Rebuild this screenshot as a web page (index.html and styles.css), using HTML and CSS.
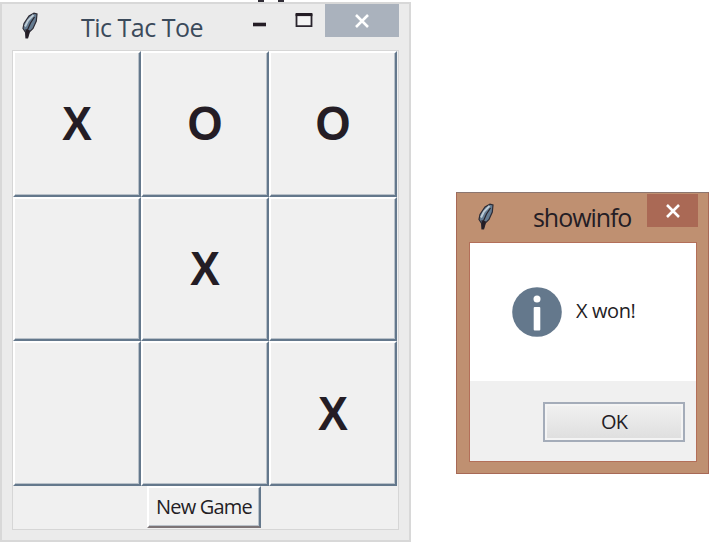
FILE: index.html
```html
<!DOCTYPE html>
<html lang="en">
<head>
<meta charset="utf-8">
<title>Tic Tac Toe</title>
<link rel="stylesheet" href="styles.css">
</head>
<body>
<svg width="0" height="0" class="defs" aria-hidden="true">
  <symbol id="feather" viewBox="0 0 16 27">
    <path d="M4 26 3.6 20.5 1 16.5 2 11.5 7 4 12 1.2 15 2 14.3 9 11 16.5 7.3 20 5.6 26Z" fill="#647b91" stroke="#2d2b34" stroke-width="1.2"/>
    <path d="M3 14.5 6 8.5 11.5 3" fill="none" stroke="#bdcbd5" stroke-width="2"/>
    <path d="M12.5 5 8.5 11 5 19" fill="none" stroke="#28232b" stroke-width="1.2"/>
    <path d="M3.5 17 8 18.5 5.7 26H3.9Z" fill="#241d25"/>
  </symbol>
  <symbol id="cross" viewBox="0 0 14 14">
    <path d="M1 1 13 13M13 1 1 13" fill="none" stroke="#fff" stroke-width="2.6"/>
  </symbol>
</svg>
<main class="desktop">
  <i class="mark mark-a"></i><i class="mark mark-b"></i>
  <section class="window game">
    <header class="game-bar">
      <svg class="feather"><use href="#feather"/></svg>
      <h1 class="title">Tic Tac Toe</h1>
      <svg class="minmax" viewBox="0 0 62 16">
        <path d="M0 11.5H13" stroke="#241d25" stroke-width="3.6"/>
        <path d="M43.5 1V13.2H58.5V1" fill="#f4f4f4" stroke="#2a252e" stroke-width="1.8"/>
        <path d="M42.6 1.5H59.4" stroke="#241d25" stroke-width="3.2"/>
      </svg>
      <div class="close close-gray"><svg class="cross"><use href="#cross"/></svg></div>
    </header>
    <div class="frame">
      <div class="board">
        <div class="cell"><span>X</span></div><div class="cell"><span>O</span></div><div class="cell"><span>O</span></div>
        <div class="cell"></div><div class="cell"><span>X</span></div><div class="cell"></div>
        <div class="cell"></div><div class="cell"></div><div class="cell"><span>X</span></div>
      </div>
      <div class="new-game"><span>New Game</span></div>
    </div>
  </section>
  <section class="window dialog">
    <header class="dialog-bar">
      <svg class="feather"><use href="#feather"/></svg>
      <h2 class="title">showinfo</h2>
      <div class="close close-red"><svg class="cross"><use href="#cross"/></svg></div>
    </header>
    <div class="content">
      <div class="message">
        <svg class="info" viewBox="0 0 50 50">
          <circle cx="25" cy="25" r="24.8" fill="#64788c"/>
          <circle cx="25" cy="12" r="3.5" fill="#fff"/>
          <rect x="21.7" y="20" width="6.6" height="23.5" rx="1" fill="#fff"/>
        </svg>
        <p class="text">X won!</p>
      </div>
      <div class="actions"><div class="ok"><span>OK</span></div></div>
    </div>
  </section>
</main>
</body>
</html>
```
FILE: styles.css
```css
* { box-sizing: border-box; }
body { margin: 0; background: #fff; font-family: "Open Sans", "Noto Sans", sans-serif; color: #241d25; }
.defs { position: absolute; }
.desktop { position: relative; width: 709px; height: 542px; overflow: hidden; }
.mark { position: absolute; top: 0; width: 6px; height: 2px; background: #332f38; }
.mark-a { left: 258px; }
.mark-b { left: 278px; }
.window { position: absolute; }
.title { flex: none; margin: 0; font-weight: 400; white-space: nowrap; line-height: 34px; }
.feather { width: 16px; height: 27px; flex: none; }
.close { display: flex; align-items: center; justify-content: center; flex: none; }
.cross { width: 14px; height: 14px; }

.game { left: 0; top: 2px; width: 411px; height: 540px; padding: 0 11px 0 10px; border: 2px solid #d8d8d8; background: #ebebeb; }
.game-bar { display: flex; height: 46px; padding-left: 10px; }
.game-bar .feather { margin-top: 8px; }
.game-bar .title { width: 125px; margin: 6px 0 0 43px; font-size: 25px; letter-spacing: -.5px; color: #3b4a5b; }
.minmax { width: 62px; height: 16px; margin: 9px 0 0 47px; flex: none; }
.close-gray { width: 74px; height: 33px; margin-left: 10px; background: #aab2bd; }
.frame { width: 387px; height: 480px; border: 1px solid #d6d6d6; background: #f0f0f0; display: flex; flex-direction: column; align-items: flex-start; }
.board { display: grid; grid-template-columns: repeat(3, 128px); grid-template-rows: 146px 144px 145px; width: 384px; }
.cell { display: flex; align-items: center; justify-content: center; border: solid; border-width: 2px; border-color: #fff #64788c #64788c #fff; box-shadow: inset -1px -1px #b9c1c9; font: bold 45px "Liberation Sans", sans-serif; }
.cell span { transform: scaleY(1.06); }
.new-game { width: 114px; height: 42px; margin-left: 134px; padding-bottom: 1px; border: solid; border-width: 2px; border-color: #fff #64788c #7c7476 #fff; box-shadow: inset -1px -1px #b9c1c9; display: flex; align-items: center; justify-content: center; font-size: 20px; letter-spacing: -.8px; white-space: nowrap; }

.dialog { left: 456px; top: 192px; width: 253px; height: 282px; padding: 0 11px 0 12px; border: 1px solid #a76956; border-top-color: #8b7670; background: #bf9071; }
.dialog-bar { display: flex; height: 49px; padding-left: 9px; }
.dialog-bar .feather { margin-top: 10px; }
.dialog-bar .title { width: 100px; margin: 7px 0 0 39px; font-size: 25px; letter-spacing: -1.05px; }
.close-red { width: 51px; height: 33px; margin: 1px 0 0 14px; background: #aa6955; }
.content { width: 228px; height: 220px; border: 1px solid #b36f59; background: #f0f0f0; }
.message { display: flex; height: 138px; padding: 44px 0 0 42px; background: #fff; }
.info { width: 50px; height: 50px; flex: none; }
.text { margin: 10px 0 0 14px; font-size: 20px; line-height: 28px; letter-spacing: -.4px; white-space: nowrap; }
.actions { display: flex; justify-content: flex-end; padding: 21px 11px 0 0; }
.ok { display: flex; align-items: center; justify-content: center; width: 142px; height: 40px; padding-bottom: 2px; border: 2px solid #a4acb9; background: linear-gradient(#f1f1f1, #dedede); box-shadow: inset 0 0 0 2px #f4f4f4; font-size: 20px; letter-spacing: -1px; }
```
